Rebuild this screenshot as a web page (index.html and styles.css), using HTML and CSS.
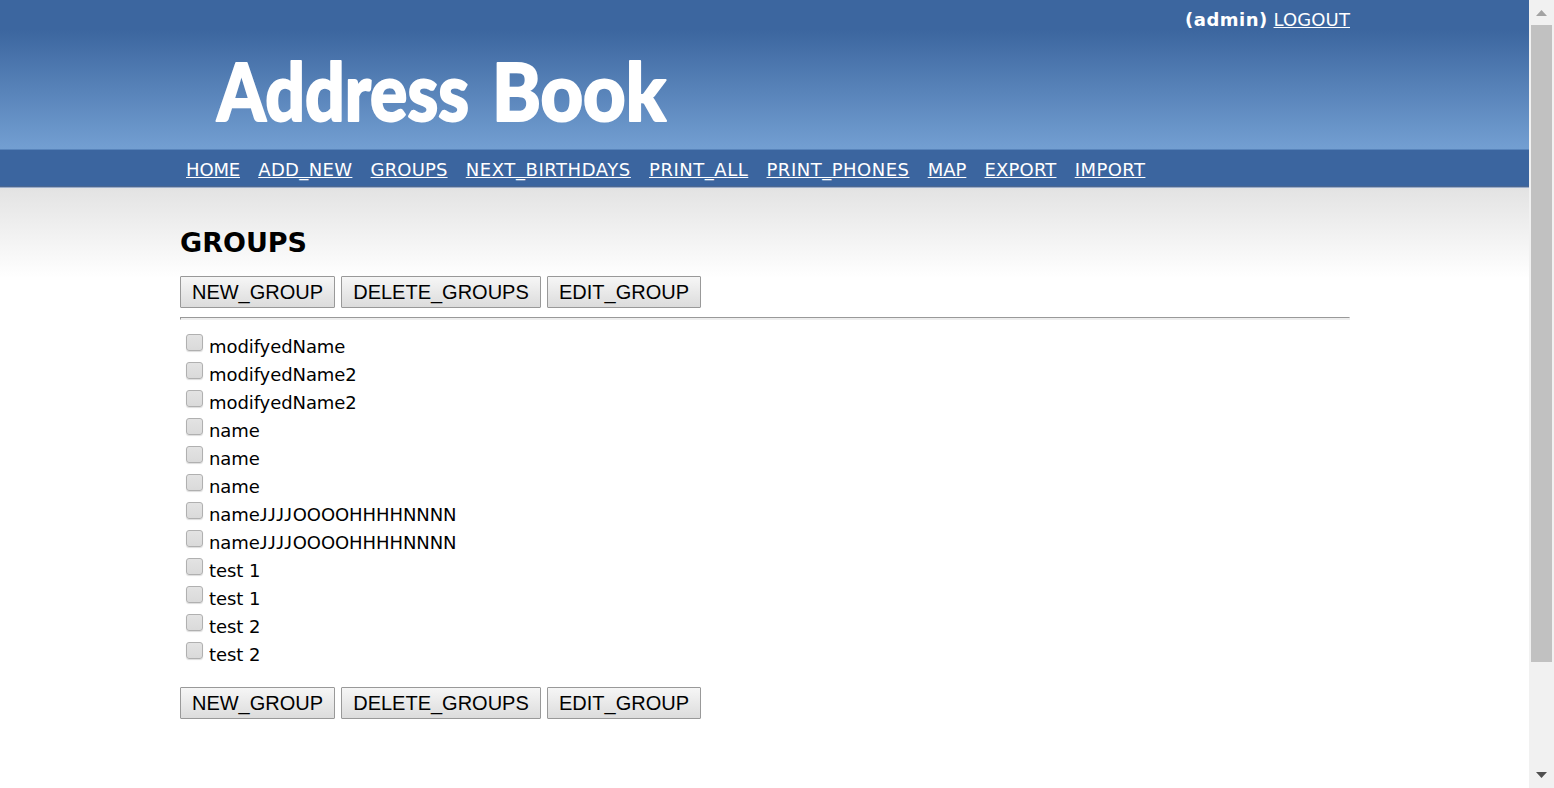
FILE: index.html
```
<!DOCTYPE html>
<html lang="en">
<head>
<meta charset="utf-8">
<title>Address Book</title>
<link rel="stylesheet" href="styles.css">
</head>
<body>
<div class="page">
  <header class="header">
    <div class="inner">
      <div class="account"><b>(admin)</b> <a href="#">LOGOUT</a></div>
      <svg class="logo" width="500" height="90" role="img" aria-label="Address Book"><text y="72" x="16" textLength="252" lengthAdjust="spacingAndGlyphs">Address</text><text y="72" x="291" textLength="174" lengthAdjust="spacingAndGlyphs">Book</text></svg>
    </div>
  </header>
  <nav class="nav">
    <div class="inner links">
      <a class="n1" href="#">HOME</a><a class="n2" href="#">ADD_NEW</a><a class="n3" href="#">GROUPS</a><a class="n4" href="#">NEXT_BIRTHDAYS</a><a class="n5" href="#">PRINT_ALL</a><a class="n6" href="#">PRINT_PHONES</a><a class="n7" href="#">MAP</a><a class="n8" href="#">EXPORT</a><a class="n9" href="#">IMPORT</a>
    </div>
  </nav>
  <main class="content">
    <form class="inner">
      <h1>GROUPS</h1>
      <div class="buttons"><button class="b1" type="button">NEW_GROUP</button><button class="b2" type="button">DELETE_GROUPS</button><button class="b3" type="button">EDIT_GROUP</button></div>
      <hr>
      <div class="list">
        <label><input type="checkbox"><span>modifyedName</span></label>
        <label><input type="checkbox"><span>modifyedName2</span></label>
        <label><input type="checkbox"><span>modifyedName2</span></label>
        <label><input type="checkbox"><span>name</span></label>
        <label><input type="checkbox"><span>name</span></label>
        <label><input type="checkbox"><span>name</span></label>
        <label><input type="checkbox"><span>name<i>JJJJ</i>OOOOHHHHNNNN</span></label>
        <label><input type="checkbox"><span>name<i>JJJJ</i>OOOOHHHHNNNN</span></label>
        <label><input type="checkbox"><span>test 1</span></label>
        <label><input type="checkbox"><span>test 1</span></label>
        <label><input type="checkbox"><span>test 2</span></label>
        <label><input type="checkbox"><span>test 2</span></label>
      </div>
      <div class="buttons"><button class="b1" type="button">NEW_GROUP</button><button class="b2" type="button">DELETE_GROUPS</button><button class="b3" type="button">EDIT_GROUP</button></div>
    </form>
  </main>
</div>
<div class="scrollbar">
  <svg width="11" height="6" viewBox="0 0 11 6"><path d="M0 6L5.5 0L11 6Z" fill="#a3a3a3"/></svg>
  <div class="thumb"></div>
  <svg class="down" width="11" height="6" viewBox="0 0 11 6"><path d="M0 0H11L5.5 6Z" fill="#505050"/></svg>
</div>
</body>
</html>
```

FILE: styles.css
```
* { box-sizing: border-box; }
body { margin: 0; height: 788px; display: flex; overflow: hidden; background: #fff; color: #000; font: 18px/28px Verdana, "DejaVu Sans", sans-serif; }
.page { width: 1529px; }
.inner { width: 1170px; margin-left: 180px; }
.header { height: 150px; background: linear-gradient(#3c669f 0, #3c669f 30px, #739fd2 149px); border-bottom: 1px solid #5884bb; color: #fff; }
.header a, .nav a { color: #fff; text-decoration: underline; text-decoration-thickness: 1px; text-underline-offset: 1px; text-decoration-skip-ink: none; }
.account { height: 49px; padding-top: 6px; text-align: right; }
.account b { letter-spacing: .5px; }
.account a { letter-spacing: .1px; }
.logo { display: block; margin-left: 21px; overflow: visible; }
.logo text { font: 900 80px Lato, sans-serif; fill: #fff; stroke: #fff; stroke-width: 2px; stroke-linejoin: round; }
.nav { height: 38px; background: #3b659f; border-bottom: 1px solid #9caecb; box-shadow: inset 0 -1px #4c6790; }
.links { display: flex; gap: 18.2px; padding: 6px 0 0 6px; white-space: nowrap; }
.n1 { letter-spacing: -.15px; }
.n2 { letter-spacing: .36px; }
.n3 { letter-spacing: .15px; }
.n4 { letter-spacing: .57px; }
.n5 { letter-spacing: .53px; }
.n6 { letter-spacing: .5px; }
.n8 { letter-spacing: .17px; }
.n9 { letter-spacing: .45px; }
.content { height: 600px; background: linear-gradient(#e3e3e3, #fff 90px); padding-top: 36px; }
h1 { margin: 0 0 15px; font-size: 27px; line-height: 37px; }
.buttons { display: flex; gap: 6px; }
button { height: 32px; padding: 0; border: 1px solid #999; border-radius: 1px; background: linear-gradient(#f6f6f6, #dcdcdc); color: #000; font: 20px "Liberation Sans", Arial, sans-serif; white-space: nowrap; }
.b1 { width: 155px; }
.b2 { width: 200px; }
.b3 { width: 154px; }
hr { height: 3px; margin: 9px 0 12px; border: 1px solid; border-color: #999 #eee #eee #999; background: #eee; }
.list { padding: 0 0 19px 6px; }
label { display: flex; height: 28px; }
label span { padding-top: 1px; letter-spacing: -.08px; }
label i { display: inline-block; width: 33px; line-height: 18px; font-family: Lato, sans-serif; font-style: normal; letter-spacing: .9px; }
input { appearance: none; width: 17px; height: 17px; margin: 2px 6px 0 0; border: 1.5px solid #b0b0b0; border-radius: 3px; background: linear-gradient(#e3e3e3, #dadada); box-shadow: 0 1px 1px #ddd; }
.scrollbar { width: 25px; background: #f1f1f1; display: flex; flex-direction: column; align-items: center; padding: 10px 0; }
.thumb { width: 21px; height: 637px; margin-top: 9px; background: #c1c1c1; }
.down { margin-top: auto; }
```
